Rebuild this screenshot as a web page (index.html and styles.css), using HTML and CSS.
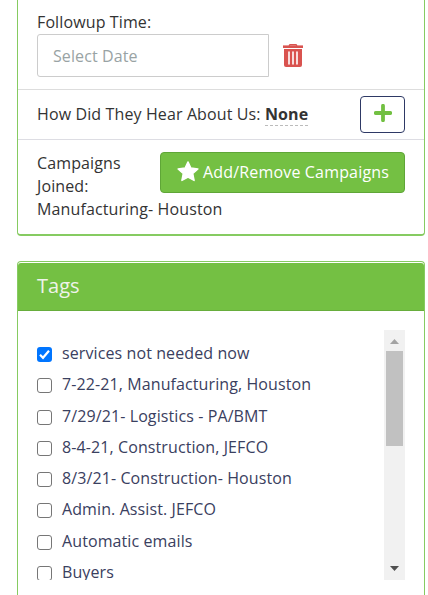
FILE: index.html
```html
<!DOCTYPE html>
<html lang="en">
<head>
<meta charset="utf-8">
<title>Contact details</title>
<link rel="stylesheet" href="styles.css">
</head>
<body>
<section class="card details">
  <div class="row followup">
    <div class="label">Followup Time:</div>
    <div class="date-line">
      <input class="date" type="text" placeholder="Select Date">
      <svg class="trash" width="20" height="23" viewBox="0 0 20 23" fill="none" stroke="#d9534f"><path d="M0 2.7H20" stroke-width="2.6"/><path d="M6 1.8L7 .7H13L14 1.8" stroke-width="1.4"/><path d="M1 5H19V21Q19 23 17 23H3Q1 23 1 21Z" fill="#d9534f" stroke="none"/><path d="M6 8V20M10 8V20M14 8V20" stroke="#fff" stroke-width="1.6" stroke-linecap="round"/></svg>
    </div>
  </div>
  <div class="row source">
    <div class="source-text">How Did They Hear About Us: <b class="editable">None</b></div>
    <button class="add" aria-label="Add"><svg width="18" height="18" viewBox="0 0 18 18"><path d="M9 1.7V16.3M1.7 9H16.3" stroke="#72c042" stroke-width="3.8" stroke-linecap="round"/></svg></button>
  </div>
  <div class="row campaigns">
    <button class="manage"><svg width="22" height="21" viewBox="0 0 22 21"><path fill="#fff" stroke="#fff" stroke-width="1.4" stroke-linejoin="round" d="M11 .9L13.9 7L20.9 7.9L15.8 12.6L17.1 19.5L11 16.2L4.9 19.5L6.2 12.6L1.1 7.9L8.1 7Z"/></svg><span>Add/Remove Campaigns</span></button>
    <div>Campaigns Joined:</div>
    <div>Manufacturing- Houston</div>
  </div>
</section>
<section class="card tags">
  <h2 class="title">Tags</h2>
  <div class="panel">
    <div class="list">
      <label class="tag"><span class="box checked"><svg width="15" height="15" viewBox="0 0 15 15"><path d="M3 7.8L6 10.8L12 3.8" fill="none" stroke="#fff" stroke-width="2.2"/></svg></span>services not needed now</label>
      <label class="tag"><span class="box"></span>7-22-21, Manufacturing, Houston</label>
      <label class="tag"><span class="box"></span>7/29/21- Logistics - PA/BMT</label>
      <label class="tag"><span class="box"></span>8-4-21, Construction, JEFCO</label>
      <label class="tag"><span class="box"></span>8/3/21- Construction- Houston</label>
      <label class="tag"><span class="box"></span>Admin. Assist. JEFCO</label>
      <label class="tag"><span class="box"></span>Automatic emails</label>
      <label class="tag"><span class="box"></span>Buyers</label>
    </div>
    <div class="scrollbar">
      <svg class="arrow" width="21" height="21" viewBox="0 0 21 21"><path fill="#a3a3a3" d="M6 14L10.5 9L15 14Z"/></svg>
      <div class="thumb"></div>
      <svg class="arrow end" width="21" height="21" viewBox="0 0 21 21"><path fill="#505050" d="M6 7L10.5 12L15 7Z"/></svg>
    </div>
  </div>
</section>
</body>
</html>
```
FILE: styles.css
```css
* { box-sizing: border-box; }
body {
  margin: 0;
  background: #fff;
  color: #333;
  font: 16px/23px "Open Sans", sans-serif;
  letter-spacing: 0.12px;
}
.card {
  width: 408px;
  margin-left: 17px;
  border: 1px solid #86cb61;
}
.details {
  height: 236px;
  border-top: 0;
  border-bottom-width: 2px;
  border-radius: 0 0 4px 4px;
}
.row { padding: 0 19px; }
.followup {
  height: 90px;
  padding-top: 11px;
  border-bottom: 1px solid #ddd;
}
.date-line { display: flex; align-items: center; }
.date {
  width: 232px;
  height: 43px;
  padding: 0 15px;
  border: 1px solid #ccc;
  border-radius: 3px 0 0 3px;
  font: inherit;
  letter-spacing: 0.1px;
}
.date::placeholder { color: #99a3a4; opacity: 1; }
.trash { margin-left: 14px; }
.source {
  display: flex;
  justify-content: space-between;
  align-items: center;
  height: 50px;
  border-bottom: 1px solid #dddde3;
}
.source-text { white-space: nowrap; }
.editable {
  border-bottom: 1px dashed #bbb;
}
.add {
  display: flex;
  justify-content: center;
  width: 45px;
  height: 37px;
  padding: 7px 0 0;
  border: 1px solid #2e3965;
  border-radius: 4px;
  background: #fff;
}
.campaigns { padding-top: 12px; }
.manage {
  float: right;
  display: flex;
  align-items: center;
  width: 245px;
  height: 41px;
  margin-left: 15px;
  padding: 0 0 2px 16px;
  border: 1px solid #5fa637;
  border-radius: 4px;
  background: #74c043;
  color: #fff;
  font: inherit;
  letter-spacing: 0.17px;
  white-space: nowrap;
}
.manage span { margin-left: 4px; padding-top: 2px; }
.tags {
  height: 334px;
  margin-top: 25px;
  padding-top: 1px;
  border-bottom: 0;
  border-radius: 4px 4px 0 0;
}
.title {
  height: 48px;
  margin: 0;
  padding: 0 19px;
  border-bottom: 1px solid #67ad3c;
  border-radius: 3px 3px 0 0;
  background: #74c043;
  color: #eef3ea;
  font-size: 20px;
  font-weight: 400;
  letter-spacing: 0;
  line-height: 46px;
}
.panel {
  display: flex;
  height: 250px;
  margin: 19px 19px 0;
  overflow: hidden;
}
.list { flex: 1; padding-top: 8px; }
.tag {
  display: flex;
  align-items: center;
  height: 31.25px;
  line-height: 31.25px;
  color: #3a4060;
  letter-spacing: 0.1px;
  white-space: nowrap;
}
.box {
  width: 15px;
  height: 15px;
  margin: 2px 10px 0 0;
  border: 1px solid #767676;
  border-radius: 3px;
}
.checked { border: 0; background: #0075ff; }
.checked svg { display: block; }
.scrollbar {
  display: flex;
  flex-direction: column;
  width: 21px;
  background: #f1f1f1;
}
.arrow { flex: none; }
.thumb {
  width: 17px;
  height: 95px;
  margin-left: 2px;
  background: #c1c1c1;
}
.end { margin-top: auto; }
```
